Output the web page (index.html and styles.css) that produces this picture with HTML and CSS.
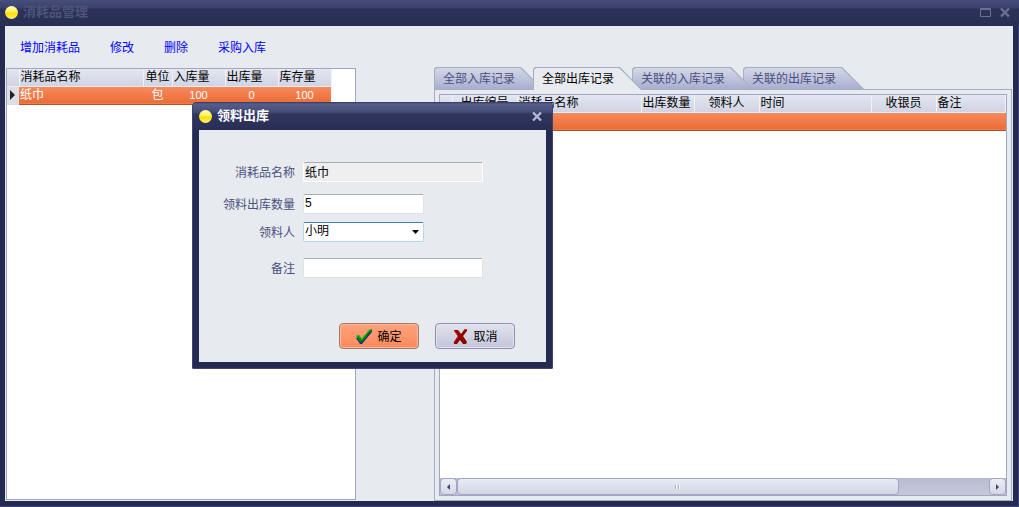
FILE: index.html
```html
<!DOCTYPE html>
<html lang="zh-CN">
<head>
    <meta charset="UTF-8">
    <meta name="viewport" content="width=device-width, initial-scale=1.0">
    <title>消耗品管理</title>
    <link rel="stylesheet" href="styles.css">
</head>
<body>

<div class="window">
    <header class="titlebar inactive">
        <span class="ball"></span>
        <h1>消耗品管理</h1>
        <div class="window-buttons">
            <button type="button" aria-label="最大化">
                <svg width="11" height="9" viewBox="0 0 11 9"><path d="M.5 .5h10v8h-10z M1 1.5h9" fill="none" stroke="currentColor"/></svg>
            </button>
            <button type="button" aria-label="关闭">
                <svg width="10" height="9" viewBox="0 0 10 9"><path d="M1 .5l8 8M9 .5l-8 8" fill="none" stroke="currentColor" stroke-width="2.400"/></svg>
            </button>
        </div>
    </header>

    <main class="content">
        <nav class="toolbar">
            <a href="#">增加消耗品</a>
            <a href="#">修改</a>
            <a href="#">删除</a>
            <a href="#">采购入库</a>
        </nav>

        <div class="panels">
            <!-- Liste des consommables -->
            <section class="grid-box stock">
                <table>
                    <colgroup>
                        <col class="c-mark"><col class="c-name"><col class="c-unit">
                        <col class="c-num"><col class="c-num"><col class="c-num">
                    </colgroup>
                    <thead>
                    <tr>
                        <th></th>
                        <th>消耗品名称</th>
                        <th class="center">单位</th>
                        <th>入库量</th>
                        <th>出库量</th>
                        <th>库存量</th>
                    </tr>
                    </thead>
                    <tbody>
                    <tr>
                        <td class="mark"><svg width="5" height="10" viewBox="0 0 5 10"><path d="M0 0l5 5-5 5z" fill="#222"/></svg></td>
                        <td>纸巾</td>
                        <td class="center">包</td>
                        <td class="num">100</td>
                        <td class="num">0</td>
                        <td class="num">100</td>
                    </tr>
                    </tbody>
                </table>
            </section>

            <!-- Historique -->
            <section class="records">
                <div class="tabs" role="tablist">
                    <button type="button" class="tab" role="tab"><span>全部入库记录</span></button>
                    <button type="button" class="tab active" role="tab" aria-selected="true"><span>全部出库记录</span></button>
                    <button type="button" class="tab" role="tab"><span>关联的入库记录</span></button>
                    <button type="button" class="tab" role="tab"><span>关联的出库记录</span></button>
                </div>
                <div class="tab-pane">
                    <div class="grid-box">
                        <table class="full">
                            <colgroup>
                                <col class="c-mark"><col class="c-id"><col class="c-name"><col class="c-num">
                                <col class="c-id"><col class="c-time"><col class="c-id"><col>
                            </colgroup>
                            <thead>
                            <tr>
                                <th></th>
                                <th class="center">出库编号</th>
                                <th>消耗品名称</th>
                                <th>出库数量</th>
                                <th class="center">领料人</th>
                                <th>时间</th>
                                <th class="center">收银员</th>
                                <th>备注</th>
                            </tr>
                            </thead>
                            <tbody>
                            <tr>
                                <td class="mark"></td>
                                <td></td>
                                <td></td>
                                <td></td>
                                <td></td>
                                <td></td>
                                <td></td>
                                <td></td>
                            </tr>
                            </tbody>
                        </table>
                        <div class="scrollbar">
                            <button type="button" aria-label="向左"><svg width="3" height="6" viewBox="0 0 3 6"><path d="M3 0v6L0 3z" fill="#3b4377"/></svg></button>
                            <div class="track"><div class="thumb"><i></i><i></i></div></div>
                            <button type="button" aria-label="向右"><svg width="3" height="6" viewBox="0 0 3 6"><path d="M0 0v6l3-3z" fill="#3b4377"/></svg></button>
                        </div>
                    </div>
                </div>
            </section>
        </div>
    </main>
</div>

<!-- Boîte de sortie de stock -->
<div class="dialog" role="dialog" aria-labelledby="dialog-title">
    <header class="titlebar">
        <span class="ball"></span>
        <h2 id="dialog-title">领料出库</h2>
        <div class="window-buttons">
            <button type="button" aria-label="关闭">
                <svg width="10" height="9" viewBox="0 0 10 9"><path d="M1 .5l8 8M9 .5l-8 8" fill="none" stroke="currentColor" stroke-width="2.400"/></svg>
            </button>
        </div>
    </header>
    <form class="dialog-body">
        <div class="field">
            <label for="name">消耗品名称</label>
            <input type="text" id="name" class="long" value="纸巾" readonly>
        </div>
        <div class="field">
            <label for="qty">领料出库数量</label>
            <input type="text" id="qty" value="5">
        </div>
        <div class="field near">
            <label for="person">领料人</label>
            <select id="person">
                <option>小明</option>
            </select>
        </div>
        <div class="field far">
            <label for="remark">备注</label>
            <input type="text" id="remark" class="long" value="">
        </div>
        <div class="actions">
            <button type="submit" class="ok">
                <svg width="16" height="15" viewBox="0 0 16 15">
                    <path d="M0 9h3l3 2 7-9 3-1v2L6 15H4z" fill="#1b2f7a"/>
                    <path d="M0 7l3-1 3 4 7-9 3-1v1L6 13H4z" fill="#078007"/>
                    <path d="M0 7.500l2.500-1 3 4 8-9.500 2-.5" fill="none" stroke="#12d012"/>
                </svg>
                确定
            </button>
            <button type="button">
                <svg width="16" height="15" viewBox="-2 0 16 15">
                    <path d="M0 1h4l3 4 3-4 3-1v2L9 7l4 6-1 2H9l-3-4-3 4H0v-2l4-6z" fill="#8e0000"/>
                    <path d="M0 2l1-1M10 1l2-1M0 13.500l4-6M.5 2L4 7" fill="none" stroke="#dd1515"/>
                </svg>
                取消
            </button>
        </div>
    </form>
</div>

</body>
</html>
```
FILE: styles.css
```css
* {
    margin: 0;
    padding: 0;
    box-sizing: border-box;
}

body {
    font-family: "Liberation Sans", "Noto Sans CJK SC", sans-serif;
    font-size: 12px;
    line-height: 16px;
    color: #000;
    background-color: #252b50;
}

button, input, select {
    font: inherit;
}

h1, h2 {
    font-size: 13px;
    font-weight: bold;
}

.window {
    display: flex;
    flex-direction: column;
    min-height: 100vh;
    padding: 0 6px 6px 5px;
    background-color: #252b50;
    box-shadow: inset -1px -1px #3d4476;
}

.titlebar {
    display: flex;
    align-items: center;
    gap: 5px;
    height: 26px;
    margin: 0 -6px 0 -5px;
    padding: 0 9px 2px 5px;
    color: #fff;
    background: linear-gradient(#464e7c, #3a416b 8px, #2c3259 9px, #282e54);
}

.titlebar.inactive h1 {
    color: #4d5379;
}

.ball {
    width: 13px;
    height: 13px;
    border-radius: 50%;
    background: linear-gradient(#fffbd0, #fff04a 45%, #ffdf00 55%, #fff27a);
}

.window-buttons {
    display: flex;
    gap: 9px;
    margin-left: auto;
}

.window-buttons button {
    display: flex;
    align-items: center;
    border: none;
    background: none;
    color: #b3b8d6;
}

.inactive .window-buttons button {
    color: #6a7095;
}

.content {
    flex: 1;
    display: flex;
    flex-direction: column;
    background-color: #e7ebef;
}

.toolbar {
    display: flex;
    gap: 30px;
    height: 41px;
    padding: 14px 15px 0;
}

.toolbar a {
    color: #00f;
    text-decoration: none;
}

.panels {
    flex: 1;
    display: flex;
    gap: 78px;
    padding: 0 1px 0 1px;
}

.grid-box {
    display: flex;
    flex-direction: column;
    border: 1px solid #a3a5c4;
    background-color: #fff;
}

.stock {
    flex: 0 0 350px;
    margin: 1px 0;
}

table {
    width: 324px;
    table-layout: fixed;
    border-collapse: collapse;
}

table.full {
    width: 100%;
}

th, td {
    height: 17px;
    padding: 0 1px;
    line-height: 15px;
    font-weight: normal;
    text-align: left;
    white-space: nowrap;
}

th {
    border-right: 1px solid #f1f2f7;
    border-bottom: 1px solid #eceef4;
    background: linear-gradient(#e4e6f0, #d0d3e2);
}

td {
    height: 18px;
    border-top: 1px solid #b2512c;
    border-bottom: 1px solid #b2512c;
    background: linear-gradient(#f98a5d, #e96c36);
    color: #fff;
}

td.mark {
    border-color: #d8dae6;
    background: #dddfea;
}

.full td.mark {
    border-color: #b2512c;
    background: linear-gradient(#f98a5d, #e96c36);
}

td.mark svg {
    display: block;
    margin-left: 2px;
}

.center, .num {
    text-align: center;
}

.num {
    font-size: 11px;
}

.c-mark { width: 12px; }
.c-name { width: 124px; }
.c-unit { width: 29px; }
.c-num { width: 53px; }
.c-id { width: 65px; }
.c-time { width: 112px; }

.records {
    flex: 1;
    min-width: 0;
    display: flex;
    flex-direction: column;
}

.tabs {
    display: flex;
    height: 22px;
}

/* onglet à bord droit incliné */
.tab {
    position: relative;
    height: 23px;
    margin-right: -10px;
    padding: 1px 28px 0 9px;
    border: none;
    background: #a3afc0;
    color: #4a5080;
    clip-path: polygon(0 2px, 2px 0, calc(100% - 22px) 0, 100% 100%, 0 100%);
}

.tab:not(.active) {
    height: 22px;
}

.tab::before {
    content: "";
    position: absolute;
    inset: 1px 1px 0;
    background: linear-gradient(#d5d8e7, #a9aed0);
    clip-path: polygon(0 2px, 2px 0, calc(100% - 22px) 0, 100% 100%, 0 100%);
}

.tab span {
    position: relative;
}

.tab:nth-child(3) {
    z-index: 1;
}

.tab.active {
    z-index: 2;
    color: #000;
}

.tab.active::before {
    background: #e7ebef;
}

.tab-pane {
    flex: 1;
    display: flex;
    border: 1px solid #a3afc0;
    padding: 4px;
}

.tab-pane .grid-box {
    flex: 1;
    min-width: 0;
}

.scrollbar {
    display: flex;
    height: 17px;
    margin-top: auto;
    background: linear-gradient(#b8bace, #c6c8da);
}

.scrollbar button {
    display: flex;
    flex: 0 0 17px;
    align-items: center;
    justify-content: center;
    border: 1px solid #a3a5c4;
    border-radius: 4px;
    background: linear-gradient(#eceef5, #d5d8e4);
}

.track {
    flex: 1;
    display: flex;
}

.thumb {
    display: flex;
    align-items: center;
    justify-content: center;
    gap: 1px;
    width: 83%;
    border: 1px solid #a3a5c4;
    border-radius: 4px;
    background: linear-gradient(#e9ebf3, #d3d6e3);
}

.thumb i {
    width: 2px;
    height: 4px;
    border-left: 1px solid #a3a5c4;
    background: #fff;
}

.dialog {
    position: absolute;
    left: 192px;
    top: 102px;
    width: 361px;
    padding: 0 7px 7px;
    border-radius: 5px 5px 2px 2px;
    overflow: hidden;
    background-color: #252b50;
    box-shadow: inset 0 0 0 1px #3d4476;
}

.dialog .titlebar {
    height: 28px;
    margin: 0 -6px;
    padding: 0 10px 0 6px;
    background: linear-gradient(#333962, #555d89 2px, #444b76 10px, #30365f 12px, #282e54);
}

.dialog-body {
    padding: 32px 16px 13px;
    background-color: #e7ebef;
}

.field {
    display: flex;
    align-items: center;
    gap: 8px;
    margin-bottom: 12px;
}

.field.near {
    margin-top: -4px;
}

.field.far {
    margin-top: 16px;
}

.field label {
    width: 80px;
    padding-top: 2px;
    text-align: right;
    color: #4a5080;
}

.field input, .field select {
    width: 121px;
    height: 20px;
    padding: 0 1px 2px;
    border: 1px solid #dfe3e8;
    border-top-color: #a9abb3;
    border-radius: 2px;
    background-color: #fff;
    color: #000;
}

.field input.long {
    width: 180px;
}

.field input[readonly] {
    border-color: #fff;
    border-top-color: #a9abb3;
    background-color: #efefef;
}

.field select {
    appearance: none;
    border-color: #b5d9ea;
    border-top-color: #3d7fad;
    background: #fff url("data:image/svg+xml,%3Csvg xmlns='http://www.w3.org/2000/svg' width='7' height='4'%3E%3Cpath d='M0 0h7L3.500 4z'/%3E%3C/svg%3E") no-repeat right 4px center;
}

.actions {
    display: flex;
    justify-content: flex-end;
    gap: 16px;
    margin-top: 45px;
    padding-right: 15px;
}

.actions button {
    display: flex;
    align-items: center;
    justify-content: center;
    gap: 5px;
    width: 80px;
    height: 26px;
    padding-top: 1px;
    border: 1px solid #8b8fb5;
    border-radius: 4px;
    background: linear-gradient(#e0e2ec, #c3c6da);
    box-shadow: inset 0 0 0 1px #e3e5ee;
}

.actions button.ok {
    border-color: #a0796f;
    background: linear-gradient(#ffa27c, #f98a5d);
    box-shadow: inset 0 0 0 1px #ffb898;
}
```
